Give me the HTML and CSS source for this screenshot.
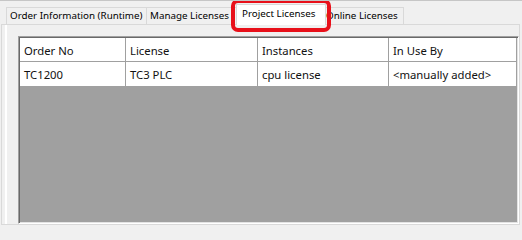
FILE: index.html
```html
<!DOCTYPE html>
<html>
<head>
<meta charset="utf-8">
<link rel="stylesheet" href="styles.css">
</head>
<body>
<div class="window">
  <div class="tabs">
    <div class="tab tab-order">Order Information (Runtime)</div>
    <div class="tab tab-manage">Manage Licenses</div>
    <div class="tab tab-project selected">Project Licenses</div>
    <div class="tab tab-online">Online Licenses</div>
  </div>
  <div class="panel">
    <div class="grid">
      <div class="rows">
        <div class="cell head">Order No</div>
        <div class="cell head">License</div>
        <div class="cell head">Instances</div>
        <div class="cell head">In Use By</div>
        <div class="cell">TC1200</div>
        <div class="cell">TC3 PLC</div>
        <div class="cell">cpu license</div>
        <div class="cell">&lt;manually added&gt;</div>
      </div>
      <div class="empty"></div>
    </div>
  </div>
</div>
</body>
</html>
```

FILE: styles.css
```css
html, body {
  margin: 0;
  padding: 0;
  background: #f0f0f0;
}

.window {
  width: 522px;
  height: 226px;
  box-sizing: border-box;
  border-top: 1px solid #c6c6c6;
  display: flex;
  flex-direction: column;
  font-family: "Noto Sans", "Open Sans", sans-serif;
  color: #000;
  overflow: hidden;
}

.tabs {
  display: flex;
  align-items: flex-end;
  height: 23px;
  padding-left: 6px;
  position: relative;
  z-index: 2;
}

.tab {
  box-sizing: border-box;
  height: 17px;
  border: 1px solid #d9d9d9;
  border-bottom: none;
  background: #f0f0f0;
  font-size: 9.8px;
  line-height: 16px;
  padding-left: 3px;
  white-space: nowrap;
  overflow: hidden;
}

.tab-order { width: 141px; }
.tab-manage { width: 91px; border-left: none; }
.tab-project { width: 86px; }
.tab-online { width: 80px; border-left: none; padding-left: 2px; }

.tab.selected {
  position: relative;
  overflow: visible;
  height: 21px;
  margin: 0 -2px -1px -2px;
  width: 90px;
  background: #fff;
  padding-left: 5px;
  line-height: 18px;
  z-index: 3;
}

.tab.selected::after {
  content: "";
  position: absolute;
  left: -6px;
  right: -6px;
  top: -6px;
  bottom: -7px;
  border: 4px solid #e8101a;
  border-radius: 7px;
}

.panel {
  flex: 1;
  margin: 0 2px 1px 1px;
  border: 1px solid #d9d9d9;
  padding: 11px 0 0 16px;
  display: flex;
  box-shadow: inset 3px 0 0 #f0f0f0, inset 5px 0 0 #ffffff;
  position: relative;
  z-index: 1;
}

.grid {
  flex: 1;
  display: flex;
  flex-direction: column;
  border-style: solid;
  border-width: 1px;
  border-color: #a0a0a0 #ffffff #ffffff #a0a0a0;
  box-shadow: inset 1px 1px 0 #696969, inset -1px -1px 0 #e3e3e3;
  padding: 1px;
  background: #a0a0a0;
}

.rows {
  display: grid;
  grid-template-columns: 106px 132px 131px 128px;
  grid-template-rows: 24px 25px;
}

.cell {
  box-sizing: border-box;
  background: #fff;
  border-right: 1px solid #a0a0a0;
  border-bottom: 1px solid #a0a0a0;
  font-size: 11.3px;
  padding-left: 4px;
  display: flex;
  align-items: center;
  white-space: nowrap;
  color: #111;
}

.cell.head {
  padding-top: 1px;
}

.empty {
  flex: 1;
  background: #a0a0a0;
}
```
